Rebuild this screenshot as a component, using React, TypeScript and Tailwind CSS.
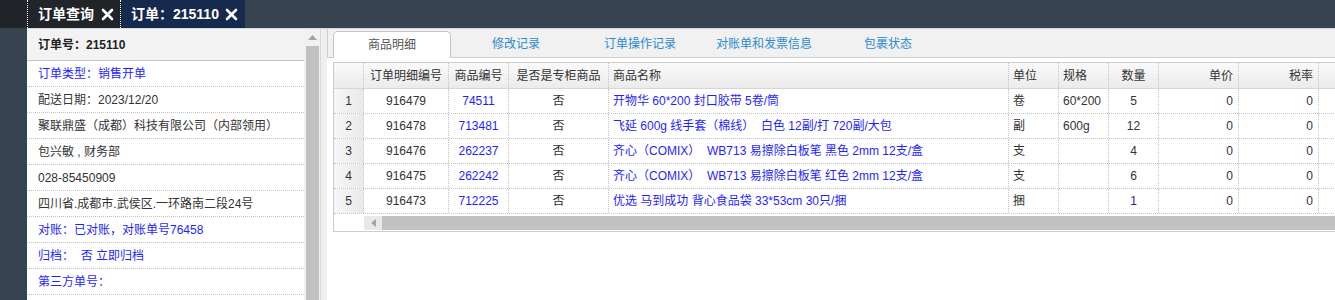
import React from "react";

const blue = "text-[#1f1fff]";

const sideRows = [
  { text: "订单类型：销售开单", blue: true },
  { text: "配送日期：2023/12/20" },
  { text: "聚联鼎盛（成都）科技有限公司（内部领用）" },
  { text: "包兴敏 , 财务部" },
  { text: "028-85450909" },
  { text: "四川省.成都市.武侯区.一环路南二段24号" },
  { text: "对账：已对账，对账单号76458", blue: true },
  { text: "归档：  否 立即归档", blue: true },
  { text: "第三方单号：", blue: true },
  { text: "" },
];

const tabs = ["商品明细", "修改记录", "订单操作记录", "对账单和发票信息", "包裹状态"];

const cols = [
  { title: "", w: "w-[30px]", align: "center" },
  { title: "订单明细编号", w: "w-[85px]", align: "center" },
  { title: "商品编号", w: "w-[60px]", align: "center" },
  { title: "是否是专柜商品", w: "w-[100px]", align: "center" },
  { title: "商品名称", w: "w-[400px]", align: "left" },
  { title: "单位", w: "w-[50px]", align: "left" },
  { title: "规格", w: "w-[50px]", align: "left" },
  { title: "数量", w: "w-[50px]", align: "center" },
  { title: "单价", w: "w-[80px]", align: "right" },
  { title: "税率", w: "w-[80px]", align: "right" },
  { title: "", w: "w-[100px]", align: "left" },
];

const rows = [
  ["1", "916479", "74511", "否", "开物华 60*200 封口胶带 5卷/筒", "卷", "60*200", "5", "0", "0", ""],
  ["2", "916478", "713481", "否", "飞延 600g 线手套（棉线）  白色 12副/打 720副/大包", "副", "600g", "12", "0", "0", ""],
  ["3", "916476", "262237", "否", "齐心（COMIX）  WB713 易擦除白板笔 黑色 2mm 12支/盒", "支", "", "4", "0", "0", ""],
  ["4", "916475", "262242", "否", "齐心（COMIX）  WB713 易擦除白板笔 红色 2mm 12支/盒", "支", "", "6", "0", "0", ""],
  ["5", "916473", "712225", "否", "优选 马到成功 背心食品袋 33*53cm 30只/捆", "捆", "", "1", "0", "0", ""],
];

const alignCls = (a: string) =>
  a === "center" ? "justify-center" : a === "right" ? "justify-end pr-[5px]" : "justify-start pl-[4px]";

const CloseIcon = () => (
  <svg width="13" height="13" viewBox="0 0 13 13" className="shrink-0">
    <path d="M2 2 L11 11 M11 2 L2 11" stroke="white" strokeWidth="2.6" strokeLinecap="round" />
  </svg>
);

export default function App() {
  return (
    <div className="w-[1335px] h-[300px] overflow-hidden bg-white font-['Liberation_Sans','Noto_Sans_CJK_SC',sans-serif] text-[12px] text-[#333]">
      {/* top tabs */}
      <div className="flex h-[28px] bg-[#37434f]">
        <div className="w-[27px] bg-[#212529]" />
        <div className="flex w-[94px] items-center gap-[7px] border-x border-dotted border-white bg-[#212529] pl-[10px] text-[14px] font-bold text-white">
          订单查询
          <CloseIcon />
        </div>
        <div className="flex w-[124px] items-center gap-[6px] bg-[#162a4d] pl-[10px] text-[14px] font-bold text-white">
          订单：215110
          <CloseIcon />
        </div>
      </div>

      <div className="flex h-[272px]">
        <div className="w-[27px] bg-[#37434f]" />

        {/* sidebar */}
        <div className="w-[277px] border-t border-[#d8dce0] bg-white">
          <div className="flex h-[32px] items-center border-b border-[#c8c8c8] bg-[#f3f3f3] pl-[11px] font-bold text-[#222]">
            订单号：215110
          </div>
          {sideRows.map((r, i) => (
            <div
              key={i}
              className={`flex h-[26px] items-center whitespace-pre border-b border-dotted border-[#c4c4c4] pl-[11px] ${r.blue ? blue : "text-[#333]"}`}
            >
              {r.text}
            </div>
          ))}
        </div>

        {/* sidebar scrollbar */}
        <div className="flex w-[16px] flex-col border-t border-[#d8dce0] bg-[#f1f1f1]">
          <div className="flex h-[17px] items-center justify-center">
            <svg width="9" height="5" viewBox="0 0 9 5">
              <path d="M0 5 L4.5 0 L9 5 Z" fill="#a3a3a3" />
            </svg>
          </div>
          <div className="ml-[2px] mr-[1px] flex-1 bg-[#c1c1c1]" />
        </div>

        {/* splitter */}
        <div className="w-[7px] border-l border-t border-[#d9d9d9] bg-[#efefef]" />

        {/* main */}
        <div className="flex-1 overflow-hidden border-t border-[#d3d7db] bg-white">
          <div className="flex h-[29px] items-end gap-[6px] border-b border-l border-[#cfcfcf] bg-[#f1f1f1] pl-[5px]">
            {tabs.map((t, i) =>
              i === 0 ? (
                <div
                  key={t}
                  className="mb-[-1px] flex h-[27px] w-[118px] items-center justify-center rounded-t-[5px] border border-b-0 border-[#c6c6c6] bg-white text-[#555]"
                >
                  {t}
                </div>
              ) : (
                <div key={t} className="flex h-[26px] w-[118px] items-center justify-center text-[#2a8bd0]">
                  {t}
                </div>
              )
            )}
          </div>

          <div className="pl-[6px] pt-[4px]">
            <div className="w-[1090px] border border-[#cccccc] bg-white">
              {/* header */}
              <div className="flex h-[26px] border-b border-[#d6d6d6] bg-linear-to-b from-[#fafafa] to-[#ebebeb]">
                {cols.map((c, i) => (
                  <div
                    key={i}
                    className={`flex shrink-0 items-center border-r border-dotted border-[#c4c4c4] ${c.w} ${alignCls(c.align)}`}
                  >
                    {c.title}
                  </div>
                ))}
              </div>
              {/* rows */}
              {rows.map((r, ri) => (
                <div key={ri} className="flex h-[25px] border-b border-dotted border-[#c4c4c4]">
                  {r.map((v, ci) => {
                    const c = cols[ci];
                    let color = "text-[#333]";
                    if (ci === 2 || ci === 4) color = blue;
                    if (ci === 7 && v === "1") color = "text-[#2a1aa0]";
                    return (
                      <div
                        key={ci}
                        className={`flex shrink-0 items-center whitespace-pre border-r border-dotted border-[#c4c4c4] ${c.w} ${alignCls(c.align)} ${color} ${ci === 0 ? "bg-linear-to-r from-[#f7f7f7] to-[#e9e9e9]" : ""}`}
                      >
                        {v}
                      </div>
                    );
                  })}
                </div>
              ))}
              {/* horizontal scrollbar */}
              <div className="flex h-[17px] pt-[2px]">
                <div className="w-[30px]" />
                <div className="flex h-[14px] w-[18px] items-center justify-center bg-[#e9e9e9]">
                  <svg width="5" height="8" viewBox="0 0 5 8">
                    <path d="M5 0 L0 4 L5 8 Z" fill="#a3a3a3" />
                  </svg>
                </div>
                <div className="h-[14px] flex-1 bg-[#c1c1c1]" />
              </div>
            </div>
          </div>
        </div>
      </div>
    </div>
  );
}
